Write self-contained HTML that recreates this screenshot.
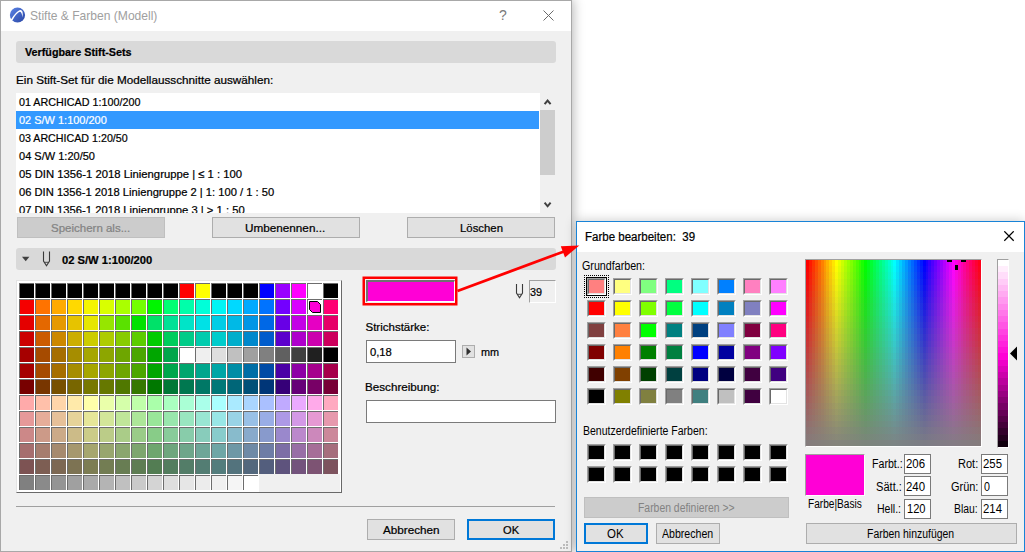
<!DOCTYPE html>
<html lang="de"><head><meta charset="utf-8"><title>Stifte &amp; Farben</title>
<style>
html,body{margin:0;padding:0;background:#fff;}
body{width:1025px;height:552px;position:relative;overflow:hidden;font-family:"Liberation Sans",sans-serif;font-size:12px;}
div,span,i,b,svg{position:absolute;box-sizing:border-box;}
.t{white-space:pre;line-height:16px;height:16px;font-style:normal;transform-origin:0 50%;-webkit-text-stroke:0.22px currentColor;}
#w1{left:0;top:0;width:572px;height:552px;background:#f0f0f0;border:1px solid #a8a8a8;box-shadow:0 0 11px 1px rgba(0,0,0,.30);}
#w1t{left:1px;top:1px;width:570px;height:30px;background:#fff;}
.hd{background:#d9d9d9;border-radius:3px;left:16px;width:540px;height:22px;}
.btn{background:#e1e1e1;border:1px solid #adadad;height:21px;}
.btn.dis{background:#cccccc;border-color:#bfbfbf;}
.btn.def{border:2px solid #0078d7;}
.inp{background:#fff;border:1px solid #7a7a7a;}
#pal{left:16px;top:280px;width:326px;height:213px;background:#fff;border:1px solid;border-color:#e3e3e3 #696969 #696969 #e3e3e3;}
#cells i{width:15px;height:15px;border:solid #6d6d6d;border-width:1px 0 0 1px;}
#w2{left:576px;top:221px;width:449px;height:331px;background:#f0f0f0;border:1px solid #1883d7;box-shadow:0 0 11px 0 rgba(0,0,0,.22);}
#w2t{left:577px;top:222px;width:447px;height:30px;background:#fff;}
.sw{width:19px;height:17px;border:2px solid;border-color:#696969 #fff #fff #696969;outline:0;}
.sw::before{content:"";position:absolute;left:-2px;top:-2px;width:19px;height:17px;box-sizing:border-box;border:1px solid;border-color:#a0a0a0 #fff #fff #a0a0a0;}
.sw::after{content:"";position:absolute;left:-1px;top:-1px;width:17px;height:15px;box-sizing:border-box;border:1px solid;border-color:#696969 #e3e3e3 #e3e3e3 #696969;}
.ni{background:#fff;border:1px solid #7a7a7a;width:27px;height:20px;}
</style></head><body>
<!-- ================= left dialog ================= -->
<div id="w1"></div>
<div id="w1t"></div>
<svg style="left:9px;top:7px" width="17" height="17" viewBox="0 0 17 17">
 <defs><linearGradient id="lg" x1="0" y1="0" x2="1" y2="1"><stop offset="0" stop-color="#5b84e6"/><stop offset="1" stop-color="#2a46a4"/></linearGradient></defs>
 <circle cx="8.5" cy="8" r="7.6" fill="url(#lg)"/>
 <path d="M0.9 14.4 C3.8 9.6 7.2 4.6 11.0 3.0 C13.8 2.5 14.2 6.4 13.5 10.5 C13.0 7.2 12.4 4.9 10.9 4.8 C7.8 5.9 5.0 10.3 2.4 15.3 Z" fill="#fff"/>
</svg>
<svg style="left:543px;top:10px" width="11" height="11" viewBox="0 0 11 11"><path d="M0.5 0.5 L10.5 10.5 M10.5 0.5 L0.5 10.5" stroke="#6a6a6a" stroke-width="1" fill="none"/></svg>

<div class="hd" style="top:41px"></div>
<!-- list -->
<div style="left:16px;top:93px;width:524px;height:120px;background:#fff;overflow:hidden"><div style="left:0;top:18px;width:523px;height:18px;background:#3399ff"></div>
<span class="t" style="left:3.30px;top:1.02px;font-size:11.5px;transform:scaleX(0.9357);color:#000;">01 ARCHICAD 1:100/200</span>
<span class="t" style="left:3.30px;top:19.02px;font-size:11.5px;transform:scaleX(0.9533);color:#fff;">02 S/W 1:100/200</span>
<span class="t" style="left:3.30px;top:37.02px;font-size:11.5px;transform:scaleX(0.9291);color:#000;">03 ARCHICAD 1:20/50</span>
<span class="t" style="left:3.30px;top:55.02px;font-size:11.5px;transform:scaleX(0.9582);color:#000;">04 S/W 1:20/50</span>
<span class="t" style="left:3.30px;top:73.02px;font-size:11.5px;transform:scaleX(0.9811);color:#000;">05 DIN 1356-1 2018 Liniengruppe | ≤ 1 : 100</span>
<span class="t" style="left:3.30px;top:91.02px;font-size:11.5px;transform:scaleX(0.9721);color:#000;">06 DIN 1356-1 2018 Liniengruppe 2 | 1: 100 / 1 : 50</span>
<span class="t" style="left:3.30px;top:109.02px;font-size:11.5px;transform:scaleX(0.9771);color:#000;">07 DIN 1356-1 2018 Liniengruppe 3 | &gt; 1 : 50</span>
</div>
<div style="left:540px;top:93px;width:16px;height:120px;background:#f0f0f0"></div>
<div style="left:540px;top:110px;width:15px;height:65px;background:#cdcdcd"></div>
<svg style="left:543px;top:97px" width="10" height="10" viewBox="0 0 10 10"><path d="M1.6 7.2 L4.6 3.6 L7.6 7.2" stroke="#404040" stroke-width="2" fill="none"/></svg>
<svg style="left:543px;top:199px" width="10" height="10" viewBox="0 0 10 10"><path d="M1.6 3.7 L4.6 7.3 L7.6 3.7" stroke="#404040" stroke-width="2" fill="none"/></svg>
<!-- buttons -->
<div class="btn dis" style="left:17px;top:217px;width:148px"></div>
<div class="btn" style="left:212px;top:217px;width:148px"></div>
<div class="btn" style="left:407px;top:217px;width:148px"></div>
<div class="hd" style="top:248px"></div>
<svg style="left:20px;top:250px" width="36" height="18" viewBox="0 0 36 18">
 <path d="M2 6.8 L9.4 6.8 L5.7 11.2 Z" fill="#404040"/>
 <path d="M23.5 1.5 V11 L26.5 15.8 L29.5 11 V1.5" fill="none" stroke="#3a3a3a" stroke-width="1.1"/>
 <path d="M24.6 12.3 H28.4" fill="none" stroke="#3a3a3a" stroke-width="0.9"/>
</svg>
<!-- palette -->
<div id="pal"></div>
<div style="left:259px;top:474px;width:81px;height:18px;background:#f0f0f0"></div>
<div id="cells"><i style="left:19px;top:283px;background:#000000"></i><i style="left:35px;top:283px;background:#000000"></i><i style="left:51px;top:283px;background:#000000"></i><i style="left:67px;top:283px;background:#000000"></i><i style="left:83px;top:283px;background:#000000"></i><i style="left:99px;top:283px;background:#000000"></i><i style="left:115px;top:283px;background:#000000"></i><i style="left:131px;top:283px;background:#000000"></i><i style="left:147px;top:283px;background:#000000"></i><i style="left:163px;top:283px;background:#000000"></i><i style="left:179px;top:283px;background:#ff0000"></i><i style="left:195px;top:283px;background:#ffff00"></i><i style="left:211px;top:283px;background:#000000"></i><i style="left:227px;top:283px;background:#000000"></i><i style="left:243px;top:283px;background:#000000"></i><i style="left:259px;top:283px;background:#0000ff"></i><i style="left:275px;top:283px;background:#9900ff"></i><i style="left:291px;top:283px;background:#ff00ff"></i><i style="left:307px;top:283px;background:#ffffff"></i><i style="left:323px;top:283px;background:#000000"></i><i style="left:19px;top:299px;background:#f50000"></i><i style="left:35px;top:299px;background:#ff7300"></i><i style="left:51px;top:299px;background:#ffaa00"></i><i style="left:67px;top:299px;background:#ffd900"></i><i style="left:83px;top:299px;background:#f5f500"></i><i style="left:99px;top:299px;background:#d9ff00"></i><i style="left:115px;top:299px;background:#aaff00"></i><i style="left:131px;top:299px;background:#73ff00"></i><i style="left:147px;top:299px;background:#00f500"></i><i style="left:163px;top:299px;background:#00ff73"></i><i style="left:179px;top:299px;background:#00ffaa"></i><i style="left:195px;top:299px;background:#00ffd9"></i><i style="left:211px;top:299px;background:#00f5f5"></i><i style="left:227px;top:299px;background:#00d9ff"></i><i style="left:243px;top:299px;background:#00aaff"></i><i style="left:259px;top:299px;background:#0073ff"></i><i style="left:275px;top:299px;background:#7300ff"></i><i style="left:291px;top:299px;background:#d900ff"></i><i style="left:307px;top:299px;background:#fff"></i><i style="left:323px;top:299px;background:#ff0073"></i><i style="left:19px;top:315px;background:#e40000"></i><i style="left:35px;top:315px;background:#e46800"></i><i style="left:51px;top:315px;background:#e69900"></i><i style="left:67px;top:315px;background:#e6c300"></i><i style="left:83px;top:315px;background:#e6e600"></i><i style="left:99px;top:315px;background:#96e600"></i><i style="left:115px;top:315px;background:#5ae100"></i><i style="left:131px;top:315px;background:#00e100"></i><i style="left:147px;top:315px;background:#00e169"></i><i style="left:163px;top:315px;background:#00e196"></i><i style="left:179px;top:315px;background:#00e4c8"></i><i style="left:195px;top:315px;background:#00e1e6"></i><i style="left:211px;top:315px;background:#00cde6"></i><i style="left:227px;top:315px;background:#00b9e6"></i><i style="left:243px;top:315px;background:#0096e6"></i><i style="left:259px;top:315px;background:#0068e6"></i><i style="left:275px;top:315px;background:#6800e6"></i><i style="left:291px;top:315px;background:#c300e6"></i><i style="left:307px;top:315px;background:#e600c3"></i><i style="left:323px;top:315px;background:#e60068"></i><i style="left:19px;top:331px;background:#cc0000"></i><i style="left:35px;top:331px;background:#cc5c00"></i><i style="left:51px;top:331px;background:#cc8800"></i><i style="left:67px;top:331px;background:#ccae00"></i><i style="left:83px;top:331px;background:#cccc00"></i><i style="left:99px;top:331px;background:#aecc00"></i><i style="left:115px;top:331px;background:#88cc00"></i><i style="left:131px;top:331px;background:#5ccc00"></i><i style="left:147px;top:331px;background:#00cc00"></i><i style="left:163px;top:331px;background:#00cc5c"></i><i style="left:179px;top:331px;background:#00cc88"></i><i style="left:195px;top:331px;background:#00ccae"></i><i style="left:211px;top:331px;background:#00cccc"></i><i style="left:227px;top:331px;background:#00aecc"></i><i style="left:243px;top:331px;background:#0088cc"></i><i style="left:259px;top:331px;background:#005ccc"></i><i style="left:275px;top:331px;background:#5c00cc"></i><i style="left:291px;top:331px;background:#ae00cc"></i><i style="left:307px;top:331px;background:#cc00ae"></i><i style="left:323px;top:331px;background:#cc005c"></i><i style="left:19px;top:347px;background:#a60000"></i><i style="left:35px;top:347px;background:#a64b00"></i><i style="left:51px;top:347px;background:#a66e00"></i><i style="left:67px;top:347px;background:#a68d00"></i><i style="left:83px;top:347px;background:#a6a600"></i><i style="left:99px;top:347px;background:#8da600"></i><i style="left:115px;top:347px;background:#6ea600"></i><i style="left:131px;top:347px;background:#4ba600"></i><i style="left:147px;top:347px;background:#00a600"></i><i style="left:163px;top:347px;background:#00a64b"></i><i style="left:179px;top:347px;background:#ffffff"></i><i style="left:195px;top:347px;background:#efefef"></i><i style="left:211px;top:347px;background:#dedede"></i><i style="left:227px;top:347px;background:#c0c0c0"></i><i style="left:243px;top:347px;background:#a0a0a0"></i><i style="left:259px;top:347px;background:#808080"></i><i style="left:275px;top:347px;background:#606060"></i><i style="left:291px;top:347px;background:#404040"></i><i style="left:307px;top:347px;background:#202020"></i><i style="left:323px;top:347px;background:#000000"></i><i style="left:19px;top:363px;background:#a60000"></i><i style="left:35px;top:363px;background:#a64b00"></i><i style="left:51px;top:363px;background:#a66e00"></i><i style="left:67px;top:363px;background:#a68d00"></i><i style="left:83px;top:363px;background:#a6a600"></i><i style="left:99px;top:363px;background:#8da600"></i><i style="left:115px;top:363px;background:#6ea600"></i><i style="left:131px;top:363px;background:#4ba600"></i><i style="left:147px;top:363px;background:#00a600"></i><i style="left:163px;top:363px;background:#00a64b"></i><i style="left:179px;top:363px;background:#00a66e"></i><i style="left:195px;top:363px;background:#00a68d"></i><i style="left:211px;top:363px;background:#00a6a6"></i><i style="left:227px;top:363px;background:#008da6"></i><i style="left:243px;top:363px;background:#006ea6"></i><i style="left:259px;top:363px;background:#004ba6"></i><i style="left:275px;top:363px;background:#4b00a6"></i><i style="left:291px;top:363px;background:#8d00a6"></i><i style="left:307px;top:363px;background:#a6008d"></i><i style="left:323px;top:363px;background:#a6004b"></i><i style="left:19px;top:379px;background:#780000"></i><i style="left:35px;top:379px;background:#783600"></i><i style="left:51px;top:379px;background:#785000"></i><i style="left:67px;top:379px;background:#786600"></i><i style="left:83px;top:379px;background:#787800"></i><i style="left:99px;top:379px;background:#667800"></i><i style="left:115px;top:379px;background:#507800"></i><i style="left:131px;top:379px;background:#367800"></i><i style="left:147px;top:379px;background:#007800"></i><i style="left:163px;top:379px;background:#007836"></i><i style="left:179px;top:379px;background:#007850"></i><i style="left:195px;top:379px;background:#007866"></i><i style="left:211px;top:379px;background:#007878"></i><i style="left:227px;top:379px;background:#006678"></i><i style="left:243px;top:379px;background:#005078"></i><i style="left:259px;top:379px;background:#003678"></i><i style="left:275px;top:379px;background:#360078"></i><i style="left:291px;top:379px;background:#660078"></i><i style="left:307px;top:379px;background:#780066"></i><i style="left:323px;top:379px;background:#780036"></i><i style="left:19px;top:395px;background:#ffaaaa"></i><i style="left:35px;top:395px;background:#ffc0aa"></i><i style="left:51px;top:395px;background:#ffd5aa"></i><i style="left:67px;top:395px;background:#ffeaaa"></i><i style="left:83px;top:395px;background:#ffffaa"></i><i style="left:99px;top:395px;background:#eaffaa"></i><i style="left:115px;top:395px;background:#d5ffaa"></i><i style="left:131px;top:395px;background:#c0ffaa"></i><i style="left:147px;top:395px;background:#aaffaa"></i><i style="left:163px;top:395px;background:#aaffc0"></i><i style="left:179px;top:395px;background:#aaffd5"></i><i style="left:195px;top:395px;background:#aaffea"></i><i style="left:211px;top:395px;background:#aaffff"></i><i style="left:227px;top:395px;background:#aaeaff"></i><i style="left:243px;top:395px;background:#aad5ff"></i><i style="left:259px;top:395px;background:#aac0ff"></i><i style="left:275px;top:395px;background:#c0aaff"></i><i style="left:291px;top:395px;background:#eaaaff"></i><i style="left:307px;top:395px;background:#ffaaea"></i><i style="left:323px;top:395px;background:#ffaac0"></i><i style="left:19px;top:411px;background:#e69999"></i><i style="left:35px;top:411px;background:#e6ad99"></i><i style="left:51px;top:411px;background:#e6c099"></i><i style="left:67px;top:411px;background:#e6d399"></i><i style="left:83px;top:411px;background:#e6e699"></i><i style="left:99px;top:411px;background:#d3e699"></i><i style="left:115px;top:411px;background:#c0e699"></i><i style="left:131px;top:411px;background:#ade699"></i><i style="left:147px;top:411px;background:#99e699"></i><i style="left:163px;top:411px;background:#99e6ad"></i><i style="left:179px;top:411px;background:#99e6c0"></i><i style="left:195px;top:411px;background:#99e6d3"></i><i style="left:211px;top:411px;background:#99e6e6"></i><i style="left:227px;top:411px;background:#99d3e6"></i><i style="left:243px;top:411px;background:#99c0e6"></i><i style="left:259px;top:411px;background:#99ade6"></i><i style="left:275px;top:411px;background:#ad99e6"></i><i style="left:291px;top:411px;background:#d399e6"></i><i style="left:307px;top:411px;background:#e699d3"></i><i style="left:323px;top:411px;background:#e699ad"></i><i style="left:19px;top:427px;background:#cc8888"></i><i style="left:35px;top:427px;background:#cc9a88"></i><i style="left:51px;top:427px;background:#ccaa88"></i><i style="left:67px;top:427px;background:#ccbb88"></i><i style="left:83px;top:427px;background:#cccc88"></i><i style="left:99px;top:427px;background:#bbcc88"></i><i style="left:115px;top:427px;background:#aacc88"></i><i style="left:131px;top:427px;background:#9acc88"></i><i style="left:147px;top:427px;background:#88cc88"></i><i style="left:163px;top:427px;background:#88cc9a"></i><i style="left:179px;top:427px;background:#88ccaa"></i><i style="left:195px;top:427px;background:#88ccbb"></i><i style="left:211px;top:427px;background:#88cccc"></i><i style="left:227px;top:427px;background:#88bbcc"></i><i style="left:243px;top:427px;background:#88aacc"></i><i style="left:259px;top:427px;background:#889acc"></i><i style="left:275px;top:427px;background:#9a88cc"></i><i style="left:291px;top:427px;background:#bb88cc"></i><i style="left:307px;top:427px;background:#cc88bb"></i><i style="left:323px;top:427px;background:#cc889a"></i><i style="left:19px;top:443px;background:#a66e6e"></i><i style="left:35px;top:443px;background:#a67d6e"></i><i style="left:51px;top:443px;background:#a68a6e"></i><i style="left:67px;top:443px;background:#a6986e"></i><i style="left:83px;top:443px;background:#a6a66e"></i><i style="left:99px;top:443px;background:#98a66e"></i><i style="left:115px;top:443px;background:#8aa66e"></i><i style="left:131px;top:443px;background:#7da66e"></i><i style="left:147px;top:443px;background:#6ea66e"></i><i style="left:163px;top:443px;background:#6ea67d"></i><i style="left:179px;top:443px;background:#6ea68a"></i><i style="left:195px;top:443px;background:#6ea698"></i><i style="left:211px;top:443px;background:#6ea6a6"></i><i style="left:227px;top:443px;background:#6e98a6"></i><i style="left:243px;top:443px;background:#6e8aa6"></i><i style="left:259px;top:443px;background:#6e7da6"></i><i style="left:275px;top:443px;background:#7d6ea6"></i><i style="left:291px;top:443px;background:#986ea6"></i><i style="left:307px;top:443px;background:#a66e98"></i><i style="left:323px;top:443px;background:#a66e7d"></i><i style="left:19px;top:459px;background:#7d5353"></i><i style="left:35px;top:459px;background:#7d5e53"></i><i style="left:51px;top:459px;background:#7d6853"></i><i style="left:67px;top:459px;background:#7d7353"></i><i style="left:83px;top:459px;background:#7d7d53"></i><i style="left:99px;top:459px;background:#737d53"></i><i style="left:115px;top:459px;background:#687d53"></i><i style="left:131px;top:459px;background:#5e7d53"></i><i style="left:147px;top:459px;background:#537d53"></i><i style="left:163px;top:459px;background:#537d5e"></i><i style="left:179px;top:459px;background:#537d68"></i><i style="left:195px;top:459px;background:#537d73"></i><i style="left:211px;top:459px;background:#537d7d"></i><i style="left:227px;top:459px;background:#53737d"></i><i style="left:243px;top:459px;background:#53687d"></i><i style="left:259px;top:459px;background:#535e7d"></i><i style="left:275px;top:459px;background:#5e537d"></i><i style="left:291px;top:459px;background:#73537d"></i><i style="left:307px;top:459px;background:#7d5373"></i><i style="left:323px;top:459px;background:#7d535e"></i><i style="left:19px;top:475px;background:#808080"></i><i style="left:35px;top:475px;background:#8a8a8a"></i><i style="left:51px;top:475px;background:#949494"></i><i style="left:67px;top:475px;background:#a0a0a0"></i><i style="left:83px;top:475px;background:#aaaaaa"></i><i style="left:99px;top:475px;background:#b4b4b4"></i><i style="left:115px;top:475px;background:#c0c0c0"></i><i style="left:131px;top:475px;background:#cacaca"></i><i style="left:147px;top:475px;background:#d4d4d4"></i><i style="left:163px;top:475px;background:#dedede"></i><i style="left:179px;top:475px;background:#e6e6e6"></i><i style="left:195px;top:475px;background:#ececec"></i><i style="left:211px;top:475px;background:#f0f0f0"></i><i style="left:227px;top:475px;background:#f5f5f5"></i><i style="left:243px;top:475px;background:#ffffff"></i></div>
<svg style="left:308px;top:300px" width="14" height="14" viewBox="0 0 14 14"><path d="M1.5 1.5 H9.5 L12.5 4.5 V12.5 H4.5 L1.5 9.5 Z" fill="#ff00d6" stroke="#000" stroke-width="1"/></svg>
<!-- colour swatch -->
<svg style="left:360px;top:274px" width="100" height="34" viewBox="0 0 100 34"><rect x="3.75" y="3.75" width="92.5" height="26.5" fill="none" stroke="#ff0000" stroke-width="2.5"/></svg>
<div style="left:366px;top:280px;width:89px;height:22px;background:#ff00d6;border:solid;border-width:2px 1px 1px 2px;border-color:#707070 #fff #fff #707070"></div>
<svg style="left:513px;top:283px" width="13" height="17" viewBox="0 0 13 17">
 <path d="M3.5 1 V10 L6.5 14.7 L9.5 10 V1" fill="none" stroke="#3a3a3a" stroke-width="1.1"/>
 <path d="M4.6 11.3 H8.4" fill="none" stroke="#3a3a3a" stroke-width="0.9"/>
</svg>
<div style="left:529px;top:280px;width:27px;height:23px;background:#f0f0f0;border:1px solid;border-color:#a0a0a0 #fff #fff #a0a0a0"></div>
<div class="inp" style="left:366px;top:340px;width:90px;height:23px"></div>
<div style="left:462px;top:345px;width:13px;height:13px;background:#e1e1e1;border:1px solid #adadad"></div>
<svg style="left:466px;top:347px" width="6" height="9" viewBox="0 0 6 9"><path d="M0.5 0.5 L5 4.5 L0.5 8.5 Z" fill="#303030"/></svg>
<div class="inp" style="left:366px;top:400px;width:190px;height:23px"></div>
<div style="left:16px;top:506px;width:539px;height:1px;background:#a0a0a0"></div>
<div class="btn" style="left:367px;top:519px;width:88px;height:21px"></div>
<div class="btn def" style="left:467px;top:519px;width:88px;height:21px"></div>
<svg style="left:560px;top:541px" width="8" height="8" viewBox="0 0 8 8" fill="#bcbcbc"><rect x="6" y="0" width="2" height="2"/><rect x="3" y="3" width="2" height="2"/><rect x="6" y="3" width="2" height="2"/><rect x="0" y="6" width="2" height="2"/><rect x="3" y="6" width="2" height="2"/><rect x="6" y="6" width="2" height="2"/></svg>

<!-- ================= right dialog ================= -->
<div id="w2"></div>
<div id="w2t"></div>
<svg style="left:1003px;top:231px" width="12" height="12" viewBox="0 0 12 12"><path d="M1.3 0.3 L10.7 9.7 M10.7 0.3 L1.3 9.7" stroke="#000" stroke-width="1.25" fill="none"/></svg>
<div id="sws"><b class="sw" style="left:587px;top:278px;background:#FF8080"></b><b class="sw" style="left:613px;top:278px;background:#FFFF80"></b><b class="sw" style="left:639px;top:278px;background:#80FF80"></b><b class="sw" style="left:665px;top:278px;background:#00FF80"></b><b class="sw" style="left:691px;top:278px;background:#80FFFF"></b><b class="sw" style="left:717px;top:278px;background:#0080FF"></b><b class="sw" style="left:743px;top:278px;background:#FF80C0"></b><b class="sw" style="left:769px;top:278px;background:#FF80FF"></b><b class="sw" style="left:587px;top:300px;background:#FF0000"></b><b class="sw" style="left:613px;top:300px;background:#FFFF00"></b><b class="sw" style="left:639px;top:300px;background:#80FF00"></b><b class="sw" style="left:665px;top:300px;background:#00FF40"></b><b class="sw" style="left:691px;top:300px;background:#00FFFF"></b><b class="sw" style="left:717px;top:300px;background:#0080C0"></b><b class="sw" style="left:743px;top:300px;background:#8080C0"></b><b class="sw" style="left:769px;top:300px;background:#FF00FF"></b><b class="sw" style="left:587px;top:322px;background:#804040"></b><b class="sw" style="left:613px;top:322px;background:#FF8040"></b><b class="sw" style="left:639px;top:322px;background:#00FF00"></b><b class="sw" style="left:665px;top:322px;background:#008080"></b><b class="sw" style="left:691px;top:322px;background:#004080"></b><b class="sw" style="left:717px;top:322px;background:#8080FF"></b><b class="sw" style="left:743px;top:322px;background:#800040"></b><b class="sw" style="left:769px;top:322px;background:#FF0080"></b><b class="sw" style="left:587px;top:344px;background:#800000"></b><b class="sw" style="left:613px;top:344px;background:#FF8000"></b><b class="sw" style="left:639px;top:344px;background:#008000"></b><b class="sw" style="left:665px;top:344px;background:#008040"></b><b class="sw" style="left:691px;top:344px;background:#0000FF"></b><b class="sw" style="left:717px;top:344px;background:#0000A0"></b><b class="sw" style="left:743px;top:344px;background:#800080"></b><b class="sw" style="left:769px;top:344px;background:#8000FF"></b><b class="sw" style="left:587px;top:366px;background:#400000"></b><b class="sw" style="left:613px;top:366px;background:#804000"></b><b class="sw" style="left:639px;top:366px;background:#004000"></b><b class="sw" style="left:665px;top:366px;background:#004040"></b><b class="sw" style="left:691px;top:366px;background:#000080"></b><b class="sw" style="left:717px;top:366px;background:#000040"></b><b class="sw" style="left:743px;top:366px;background:#400040"></b><b class="sw" style="left:769px;top:366px;background:#400080"></b><b class="sw" style="left:587px;top:388px;background:#000000"></b><b class="sw" style="left:613px;top:388px;background:#808000"></b><b class="sw" style="left:639px;top:388px;background:#808040"></b><b class="sw" style="left:665px;top:388px;background:#808080"></b><b class="sw" style="left:691px;top:388px;background:#408080"></b><b class="sw" style="left:717px;top:388px;background:#C0C0C0"></b><b class="sw" style="left:743px;top:388px;background:#400040"></b><b class="sw" style="left:769px;top:388px;background:#FFFFFF"></b><b class="sw" style="left:587px;top:444px;background:#000"></b><b class="sw" style="left:613px;top:444px;background:#000"></b><b class="sw" style="left:639px;top:444px;background:#000"></b><b class="sw" style="left:665px;top:444px;background:#000"></b><b class="sw" style="left:691px;top:444px;background:#000"></b><b class="sw" style="left:717px;top:444px;background:#000"></b><b class="sw" style="left:743px;top:444px;background:#000"></b><b class="sw" style="left:769px;top:444px;background:#000"></b><b class="sw" style="left:587px;top:466px;background:#000"></b><b class="sw" style="left:613px;top:466px;background:#000"></b><b class="sw" style="left:639px;top:466px;background:#000"></b><b class="sw" style="left:665px;top:466px;background:#000"></b><b class="sw" style="left:691px;top:466px;background:#000"></b><b class="sw" style="left:717px;top:466px;background:#000"></b><b class="sw" style="left:743px;top:466px;background:#000"></b><b class="sw" style="left:769px;top:466px;background:#000"></b></div>
<div style="left:584px;top:275px;width:25px;height:23px;border:1px dotted #000"></div>
<div style="left:586px;top:277px;width:21px;height:19px;border:1px solid #000"></div>
<!-- spectrum -->
<div style="left:805px;top:259px;width:177px;height:188px;border:1px solid;border-color:#a0a0a0 #fff #fff #a0a0a0;background:linear-gradient(to bottom,rgba(128,128,128,0.000) 0.00% 3.33%,rgba(128,128,128,0.033) 3.33% 6.67%,rgba(128,128,128,0.067) 6.67% 10.00%,rgba(128,128,128,0.100) 10.00% 13.33%,rgba(128,128,128,0.133) 13.33% 16.67%,rgba(128,128,128,0.167) 16.67% 20.00%,rgba(128,128,128,0.200) 20.00% 23.33%,rgba(128,128,128,0.233) 23.33% 26.67%,rgba(128,128,128,0.267) 26.67% 30.00%,rgba(128,128,128,0.300) 30.00% 33.33%,rgba(128,128,128,0.333) 33.33% 36.67%,rgba(128,128,128,0.367) 36.67% 40.00%,rgba(128,128,128,0.400) 40.00% 43.33%,rgba(128,128,128,0.433) 43.33% 46.67%,rgba(128,128,128,0.467) 46.67% 50.00%,rgba(128,128,128,0.500) 50.00% 53.33%,rgba(128,128,128,0.533) 53.33% 56.67%,rgba(128,128,128,0.567) 56.67% 60.00%,rgba(128,128,128,0.600) 60.00% 63.33%,rgba(128,128,128,0.633) 63.33% 66.67%,rgba(128,128,128,0.667) 66.67% 70.00%,rgba(128,128,128,0.700) 70.00% 73.33%,rgba(128,128,128,0.733) 73.33% 76.67%,rgba(128,128,128,0.767) 76.67% 80.00%,rgba(128,128,128,0.800) 80.00% 83.33%,rgba(128,128,128,0.833) 83.33% 86.67%,rgba(128,128,128,0.867) 86.67% 90.00%,rgba(128,128,128,0.900) 90.00% 93.33%,rgba(128,128,128,0.933) 93.33% 96.67%,rgba(128,128,128,0.967) 96.67% 100.00%),linear-gradient(to right,#ff0000 0.00% 1.67%,#ff1a00 1.67% 3.33%,#ff3300 3.33% 5.00%,#ff4d00 5.00% 6.67%,#ff6600 6.67% 8.33%,#ff8000 8.33% 10.00%,#ff9900 10.00% 11.67%,#ffb200 11.67% 13.33%,#ffcc00 13.33% 15.00%,#ffe500 15.00% 16.67%,#ffff00 16.67% 18.33%,#e6ff00 18.33% 20.00%,#ccff00 20.00% 21.67%,#b2ff00 21.67% 23.33%,#99ff00 23.33% 25.00%,#80ff00 25.00% 26.67%,#66ff00 26.67% 28.33%,#4cff00 28.33% 30.00%,#33ff00 30.00% 31.67%,#1aff00 31.67% 33.33%,#00ff00 33.33% 35.00%,#00ff19 35.00% 36.67%,#00ff33 36.67% 38.33%,#00ff4d 38.33% 40.00%,#00ff66 40.00% 41.67%,#00ff80 41.67% 43.33%,#00ff99 43.33% 45.00%,#00ffb3 45.00% 46.67%,#00ffcc 46.67% 48.33%,#00ffe6 48.33% 50.00%,#00ffff 50.00% 51.67%,#00e5ff 51.67% 53.33%,#00ccff 53.33% 55.00%,#00b2ff 55.00% 56.67%,#0099ff 56.67% 58.33%,#007fff 58.33% 60.00%,#0066ff 60.00% 61.67%,#004cff 61.67% 63.33%,#0033ff 63.33% 65.00%,#0019ff 65.00% 66.67%,#0000ff 66.67% 68.33%,#1900ff 68.33% 70.00%,#3300ff 70.00% 71.67%,#4d00ff 71.67% 73.33%,#6600ff 73.33% 75.00%,#7f00ff 75.00% 76.67%,#9900ff 76.67% 78.33%,#b300ff 78.33% 80.00%,#cc00ff 80.00% 81.67%,#e500ff 81.67% 83.33%,#ff00ff 83.33% 85.00%,#ff00e6 85.00% 86.67%,#ff00cc 86.67% 88.33%,#ff00b2 88.33% 90.00%,#ff0099 90.00% 91.67%,#ff0080 91.67% 93.33%,#ff0066 93.33% 95.00%,#ff004c 95.00% 96.67%,#ff0033 96.67% 98.33%,#ff001a 98.33% 100.00%)"></div>
<svg style="left:945px;top:260px" width="24" height="12" viewBox="0 0 24 12" fill="#000"><rect x="2" y="0" width="5" height="2"/><rect x="16" y="0" width="5" height="2"/><rect x="10" y="5" width="3" height="5"/></svg>
<div style="left:997px;top:259px;width:12px;height:189px;border:1px solid;border-color:#a0a0a0 #fff #fff #a0a0a0;background:linear-gradient(to bottom,#ffffff 0.00% 3.33%,#ffeefc 3.33% 6.67%,#ffddfa 6.67% 10.00%,#ffccf7 10.00% 13.33%,#ffbbf4 13.33% 16.67%,#ffaaf1 16.67% 20.00%,#ff99ef 20.00% 23.33%,#ff88ec 23.33% 26.67%,#ff77e9 26.67% 30.00%,#ff66e7 30.00% 33.33%,#ff55e4 33.33% 36.67%,#ff44e1 36.67% 40.00%,#ff33de 40.00% 43.33%,#ff22dc 43.33% 46.67%,#ff11d9 46.67% 50.00%,#ff00d6 50.00% 53.33%,#ee00c8 53.33% 56.67%,#dd00ba 56.67% 60.00%,#cc00ab 60.00% 63.33%,#bb009d 63.33% 66.67%,#aa008f 66.67% 70.00%,#990081 70.00% 73.33%,#880072 73.33% 76.67%,#770064 76.67% 80.00%,#660056 80.00% 83.33%,#550047 83.33% 86.67%,#440039 86.67% 90.00%,#33002b 90.00% 93.33%,#22001d 93.33% 96.67%,#11000e 96.67% 100.00%)"></div>
<svg style="left:1010px;top:346px" width="8" height="15" viewBox="0 0 8 15"><path d="M0 7.5 L7 0.5 V14.5 Z" fill="#000"/></svg>
<div style="left:805px;top:454px;width:60px;height:42px;background:#ff00d6;border:1px solid;border-color:#a0a0a0 #fff #fff #a0a0a0"></div>
<div class="ni" style="left:904px;top:454px"></div>
<div class="ni" style="left:904px;top:476px"></div>
<div class="ni" style="left:904px;top:499px"></div>
<div class="ni" style="left:981px;top:454px"></div>
<div class="ni" style="left:981px;top:476px"></div>
<div class="ni" style="left:981px;top:499px"></div>
<div class="btn dis" style="left:584px;top:497px;width:205px;height:21px"></div>
<div class="btn def" style="left:584px;top:523px;width:64px;height:21px"></div>
<div class="btn" style="left:656px;top:523px;width:64px;height:21px"></div>
<div class="btn" style="left:806px;top:523px;width:211px;height:21px"></div>

<svg style="left:440px;top:230px" width="160" height="80" viewBox="440 230 160 80"><path d="M457.5 291 L564 251.4" stroke="#ff0000" stroke-width="2.7" fill="none"/><path d="M579.3 245.5 L560.8 246.3 L565 257.4 Z" fill="#ff0000"/></svg>
<!-- ================= texts ================= -->
<span class="t" style="left:29.93px;top:7.60px;font-size:12.4px;transform:scaleX(0.9736);color:#a0a0a0;-webkit-text-stroke:0;">Stifte &amp; Farben (Modell)</span>
<span class="t" style="left:499.00px;top:7.45px;font-size:14px;transform:scaleX(1.0000);color:#7a7a7a;-webkit-text-stroke:0;">?</span>
<span class="t" style="left:25.20px;top:44.02px;font-size:11.5px;transform:scaleX(0.9372);color:#000;font-weight:700;">Verfügbare Stift-Sets</span>
<span class="t" style="left:15.78px;top:71.82px;font-size:11.5px;transform:scaleX(1.0187);color:#000;">Ein Stift-Set für die Modellausschnitte auswählen:</span>
<span class="t" style="left:51.00px;top:219.82px;font-size:11.5px;transform:scaleX(1.0000);color:#838383;">Speichern als...</span>
<span class="t" style="left:244.98px;top:219.82px;font-size:11.5px;transform:scaleX(1.0195);color:#000;">Umbenennen...</span>
<span class="t" style="left:459.51px;top:219.82px;font-size:11.5px;transform:scaleX(0.9881);color:#000;">Löschen</span>
<span class="t" style="left:62.00px;top:251.52px;font-size:11.5px;transform:scaleX(0.9728);color:#000;font-weight:700;">02 S/W 1:100/200</span>
<span class="t" style="left:530.06px;top:284.02px;font-size:11.5px;transform:scaleX(0.9417);color:#000;">39</span>
<span class="t" style="left:365.50px;top:318.82px;font-size:11.5px;transform:scaleX(1.0000);color:#000;">Strichstärke:</span>
<span class="t" style="left:370.00px;top:344.22px;font-size:11.5px;transform:scaleX(0.9773);color:#000;">0,18</span>
<span class="t" style="left:480.56px;top:344.22px;font-size:11.5px;transform:scaleX(0.9444);color:#000;">mm</span>
<span class="t" style="left:365.49px;top:379.22px;font-size:11.5px;transform:scaleX(1.0139);color:#000;">Beschreibung:</span>
<span class="t" style="left:383.00px;top:522.22px;font-size:11.5px;transform:scaleX(1.0182);color:#000;">Abbrechen</span>
<span class="t" style="left:503.00px;top:522.22px;font-size:11.5px;transform:scaleX(0.9688);color:#000;">OK</span>
<span class="t" style="left:584.64px;top:228.84px;font-size:12px;transform:scaleX(0.9593);color:#000;">Farbe bearbeiten:  39</span>
<span class="t" style="left:581.94px;top:258.17px;font-size:12.5px;transform:scaleX(0.8556);color:#000;-webkit-text-stroke:0;">Grundfarben:</span>
<span class="t" style="left:582.66px;top:423.07px;font-size:12.5px;transform:scaleX(0.8418);color:#000;-webkit-text-stroke:0;">Benutzerdefinierte Farben:</span>
<span class="t" style="left:637.77px;top:500.17px;font-size:12.5px;transform:scaleX(0.8322);color:#838383;-webkit-text-stroke:0;">Farben definieren &gt;&gt;</span>
<span class="t" style="left:606.78px;top:525.97px;font-size:12.5px;transform:scaleX(0.9176);color:#000;-webkit-text-stroke:0;">OK</span>
<span class="t" style="left:662.40px;top:525.97px;font-size:12.5px;transform:scaleX(0.8467);color:#000;-webkit-text-stroke:0;">Abbrechen</span>
<span class="t" style="left:871.75px;top:456.17px;font-size:12.5px;transform:scaleX(0.8500);color:#000;-webkit-text-stroke:0;">Farbt.:</span>
<span class="t" style="left:875.61px;top:479.27px;font-size:12.5px;transform:scaleX(0.8889);color:#000;-webkit-text-stroke:0;">Sätt.:</span>
<span class="t" style="left:876.86px;top:500.97px;font-size:12.5px;transform:scaleX(0.8444);color:#000;-webkit-text-stroke:0;">Hell.:</span>
<span class="t" style="left:957.82px;top:456.17px;font-size:12.5px;transform:scaleX(0.8810);color:#000;-webkit-text-stroke:0;">Rot:</span>
<span class="t" style="left:950.92px;top:479.27px;font-size:12.5px;transform:scaleX(0.8759);color:#000;-webkit-text-stroke:0;">Grün:</span>
<span class="t" style="left:953.97px;top:500.97px;font-size:12.5px;transform:scaleX(0.8296);color:#000;-webkit-text-stroke:0;">Blau:</span>
<span class="t" style="left:906.09px;top:456.17px;font-size:12.5px;transform:scaleX(0.9150);color:#000;-webkit-text-stroke:0;">206</span>
<span class="t" style="left:906.09px;top:479.27px;font-size:12.5px;transform:scaleX(0.9150);color:#000;-webkit-text-stroke:0;">240</span>
<span class="t" style="left:906.61px;top:500.97px;font-size:12.5px;transform:scaleX(0.8900);color:#000;-webkit-text-stroke:0;">120</span>
<span class="t" style="left:983.09px;top:456.17px;font-size:12.5px;transform:scaleX(0.9100);color:#000;-webkit-text-stroke:0;">255</span>
<span class="t" style="left:984.00px;top:479.27px;font-size:12.5px;transform:scaleX(0.8571);color:#000;-webkit-text-stroke:0;">0</span>
<span class="t" style="left:983.09px;top:500.97px;font-size:12.5px;transform:scaleX(0.9100);color:#000;-webkit-text-stroke:0;">214</span>
<span class="t" style="left:807.99px;top:496.37px;font-size:12.5px;transform:scaleX(0.8108);color:#000;-webkit-text-stroke:0;">Farbe|Basis</span>
<span class="t" style="left:867.26px;top:526.32px;font-size:12.5px;transform:scaleX(0.8359);color:#000;-webkit-text-stroke:0;">Farben hinzufügen</span>
</body></html>
